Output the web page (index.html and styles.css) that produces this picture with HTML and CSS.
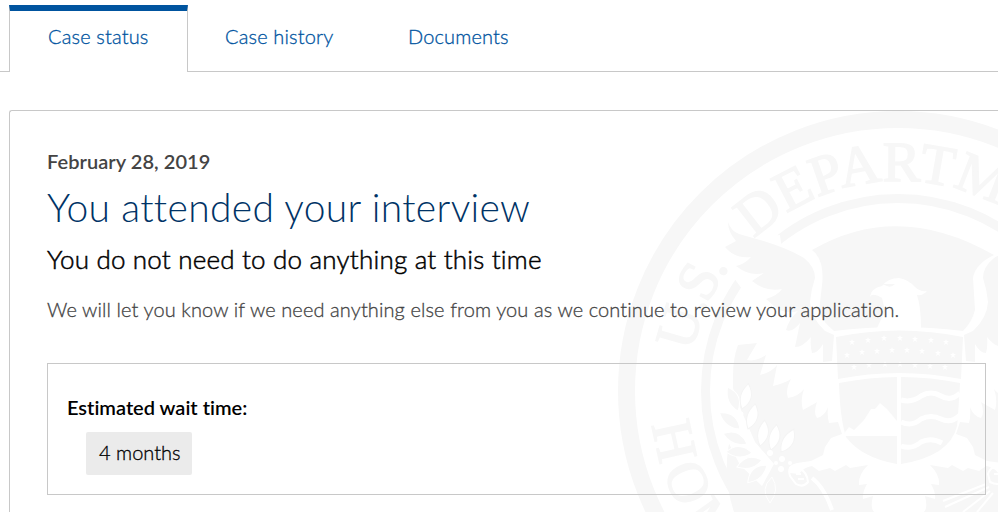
FILE: index.html
```html
<!DOCTYPE html>
<html lang="en">
<head>
<meta charset="utf-8">
<title>Case status</title>
<link rel="stylesheet" href="styles.css">
</head>
<body>
<nav class="tabs">
  <a class="tab tab-active">Case status</a>
  <a class="tab tab-history">Case history</a>
  <a class="tab tab-docs">Documents</a>
</nav>
<main class="card">
  <svg class="seal" viewBox="618 111 380 401" aria-hidden="true">
    <defs>
      <path id="top-arc" d="M689 391a210 210 0 0 1 420 0"/>
      <path id="bottom-arc" d="M650 391a249 249 0 0 0 498 0"/>
      <path id="wing" d="M728 222Q731 231 739 234L760 240Q787 248 804 258Q815 267 815 278Q811 290 810 302Q811 318 825 331L834 335L832 361L823 362L823 344Q818 353 812 353Q810 346 811 337Q803 347 795 347L800 323Q792 333 786 330Q789 319 798 311Q785 315 774 306L766 299Q777 296 782 289Q765 292 752 281L764 273Q750 277 736 266Q745 264 751 257Q735 259 725 247L736 241Q728 232 728 222Z"/>
      <path id="field" d="M738 345L757 343L747 360Q756 362 766 355L760 375Q772 372 777 365L773 386Q785 383 791 379Q785 390 788 398Q799 396 804 389Q800 400 803 410Q812 405 817 402Q813 413 817 418Q825 416 828 407Q827 416 829 423L838 422L842 434L831 438L825 447L823 455L811 461L797 463Q785 466 790 473L799 474Q804 467 812 466L819 471L830 468L835 471L846 465L850 468L868 465Q858 475 859 485L867 484Q862 493 863 499L873 496Q870 508 874 512L734 512Q720 470 733 427L733 376Q733 358 738 345Z"/>
      <path id="leaf" d="M0 0Q-8 -13 2 -26Q13 -12 0 0Z"/>
      <path id="star" d="M0-3L.8-.9 3-.9 1.2.5 2 3 0 1.5-2 3-1.2.5-3-.9-.8-.9Z"/>
    </defs>
    <circle class="line outer" cx="898" cy="391" r="271.5"/>
    <circle class="line inner" cx="898" cy="391" r="192.5"/>
    <path class="gap" d="M724 236L770 236L780 235L784 265L750 300L734 278Z"/>
    <g class="lettering">
      <text><textPath href="#top-arc" startOffset="39" textLength="94" lengthAdjust="spacing">U.S.</textPath></text>
      <text><textPath href="#top-arc" startOffset="170" textLength="374" lengthAdjust="spacing">DEPARTMENT</textPath></text>
      <text><textPath href="#bottom-arc" startOffset="34" textLength="370" lengthAdjust="spacing">HOMELAND</textPath></text>
    </g>
    <use href="#wing"/>
    <use href="#wing" transform="translate(1798 0) scale(-1 1)"/>
    <use href="#field"/>
    <use href="#field" transform="translate(1798 0) scale(-1 1)"/>
    <path d="M812 250Q898 200 994 255Q975 264 973 278L975 310Q972 322 963 331Q899 323 834 331Q823 322 819 312L822 285Q825 260 812 250Z"/>
    <path class="white" d="M870 297Q871 288 882 286Q888 278 899 278Q909 280 915 287Q920 292 927 291Q923 296 917 295Q921 307 921 328L877 328L885 311L882 298Q872 292 870 297Z"/>
    <path d="M882 284L895 284Q891 288 887 286Z"/>
    <path d="M836 337Q899 324 963 337L961 379Q899 367 838 379Z"/>
    <path d="M839 383Q870 377 897 377L897 464Q862 458 846 437Q840 418 839 383ZM901 377Q931 377 960 383Q958 418 957 426Q950 456 901 464Z"/>
    <path class="white" d="M842 436L849 427L854 430L864 420L871 409L875 409L880 403L887 409L897 421L897 436Z"/>
    <path class="wave" d="M901 400Q912 403 921 396Q931 390 941 396T960 393M901 422Q912 427 921 419Q931 414 941 419T960 415M901 446Q912 450 921 442Q931 437 942 443"/>
    <g class="white">
      <use href="#star" x="852" y="342"/><use href="#star" x="868" y="340"/><use href="#star" x="884" y="338"/><use href="#star" x="900" y="338"/><use href="#star" x="915" y="339"/><use href="#star" x="931" y="340"/><use href="#star" x="946" y="342"/>
      <use href="#star" x="847" y="355"/><use href="#star" x="862" y="352"/><use href="#star" x="877" y="351"/><use href="#star" x="892" y="350"/><use href="#star" x="907" y="350"/><use href="#star" x="922" y="351"/><use href="#star" x="938" y="353"/><use href="#star" x="953" y="355"/>
      <use href="#star" x="854" y="367"/><use href="#star" x="869" y="365"/><use href="#star" x="885" y="364"/><use href="#star" x="900" y="364"/><use href="#star" x="915" y="365"/><use href="#star" x="930" y="366"/><use href="#star" x="945" y="367"/>
    </g>
    <path class="gap" d="M733 388L741 410L755 442L774 464L762 486L740 465L722 430L720 382Z"/>
    <g class="leaves">
      <use href="#leaf" transform="translate(738 411) rotate(-28)"/><use href="#leaf" transform="translate(740 429) rotate(-56)"/>
      <use href="#leaf" transform="translate(747 444) rotate(-71)"/><use href="#leaf" transform="translate(752 453) rotate(-92)"/>
      <use href="#leaf" transform="translate(762 460) rotate(-110)"/><use href="#leaf" transform="translate(767 465) rotate(-137)"/>
      <use href="#leaf" transform="translate(772 477) rotate(180)"/>
    </g>
    <g class="leaves pale">
      <use href="#leaf" transform="translate(742 409) rotate(10)"/><use href="#leaf" transform="translate(748 429) rotate(12)"/>
      <use href="#leaf" transform="translate(760 446) rotate(6)"/><use href="#leaf" transform="translate(771 450) rotate(8)"/>
      <use href="#leaf" transform="translate(781 452) rotate(25)"/>
    </g>
    <g class="white">
      <circle cx="741" cy="414" r="2.5"/><circle cx="748" cy="434" r="3"/><circle cx="755" cy="452" r="3"/><circle cx="767" cy="461" r="3"/><circle cx="770" cy="453" r="3"/><circle cx="782" cy="459" r="3"/><circle cx="781" cy="469" r="3"/><circle cx="790" cy="463" r="2"/><circle cx="750" cy="442" r="2"/><circle cx="761" cy="457" r="2"/><circle cx="776" cy="463" r="2"/>
    </g>
    <path class="claw" d="M795 468Q787 466 790 476L796 484Q803 488 808 482Q807 472 800 469M796 474h5m-3 5h6"/>
    <path class="stem" d="M812 478Q824 487 832 510"/>
    <path class="claw" d="M1003 468Q991 464 988 474L990 482Q998 486 1003 482M994 474h5"/>
    <path class="arrows" d="M943 501L986 484M945 507L989 487M963 512L990 491M977 512L993 493"/>
  </svg>
  <div class="content">
    <p class="date">February 28, 2019</p>
    <h1>You attended your interview</h1>
    <h2>You do not need to do anything at this time</h2>
    <p class="message">We will let you know if we need anything else from you as we continue to review your application.</p>
    <section class="wait">
      <p class="wait-label">Estimated wait time:</p>
      <span class="duration">4 months</span>
    </section>
  </div>
</main>
</body>
</html>
```
FILE: styles.css
```css
* { box-sizing: border-box; }
body {
  margin: 0;
  height: 512px;
  overflow: hidden;
  background: #fff;
  font-family: Lato, "Open Sans", sans-serif;
  font-size: 20px;
  font-variant-ligatures: none;
}
p, h1, h2 { margin: 0; white-space: nowrap; }

.tabs {
  display: flex;
  height: 72px;
  padding: 5px 0 0 9px;
  background: linear-gradient(#c8c8c8, #c8c8c8) 0 71px / 100% 1px no-repeat;
}
.tab {
  color: #00549f;
  line-height: 24px;
  font-weight: 300;
  letter-spacing: .15px;
  -webkit-text-stroke: .3px;
  white-space: nowrap;
}
.tab-active {
  width: 179px;
  padding: 13px 0 0 38px;
  border: 1px solid #c8c8c8;
  border-top: 6px solid #00549f;
  border-bottom: 0;
  background: #fff;
}
.tab-history { width: 183px; padding: 19px 0 0 37px; }
.tab-docs { padding: 19px 0 0 37px; }

.card {
  position: relative;
  width: 989px;
  height: 402px;
  margin: 38px 0 0 9px;
  border: 1px solid #c8c8c8;
  border-width: 1px 0 0 1px;
  border-radius: 3px 0 0 0;
  overflow: hidden;
}
.seal {
  position: absolute;
  left: 608px;
  top: 0;
  width: 380px;
  height: 401px;
  fill: #f7f7f7;
}
.line { fill: none; stroke: #f7f7f7; }
.outer { stroke-width: 17px; }
.inner { stroke-width: 9px; }
.lettering { font: 400 57px "Liberation Serif", serif; stroke: #f7f7f7; stroke-width: 1.5px; }
.white, .gap { fill: #fff; }
.wave { fill: none; stroke: #fff; stroke-width: 5px; }
.leaves { stroke: #fff; stroke-width: 1px; }
.pale { fill: #fff; stroke: #f4f4f4; }
.claw, .stem, .arrows { fill: none; stroke: #fff; stroke-width: 2px; }
.stem { stroke-width: 4px; }

.content { position: relative; padding: 38px 0 0 37px; }
.date { color: #444; font-weight: 600; line-height: 24px; letter-spacing: .05px; }
h1 { margin-top: 10px; color: #003366; font-size: 39px; font-weight: 300; line-height: 48px; letter-spacing: .33px; }
h2 { margin-top: 12px; color: #000; font-size: 26px; font-weight: 300; line-height: 32px; letter-spacing: .2px; -webkit-text-stroke: .5px; }
.message { margin-top: 22px; color: #444; font-weight: 300; line-height: 24px; letter-spacing: .1px; -webkit-text-stroke: .3px; }
.wait {
  width: 939px;
  height: 132px;
  margin: 42px 0 0;
  padding: 31px 0 0 19px;
  border: 1px solid #c8c8c8;
}
.wait-label { font-weight: 600; line-height: 24px; }
.duration {
  display: block;
  width: 106px;
  height: 43px;
  margin: 13px 0 0 19px;
  padding-left: 13px;
  border-radius: 2px;
  background: #ebebeb;
  font-weight: 300;
  -webkit-text-stroke: .3px;
  line-height: 40px;
  white-space: nowrap;
}
```
